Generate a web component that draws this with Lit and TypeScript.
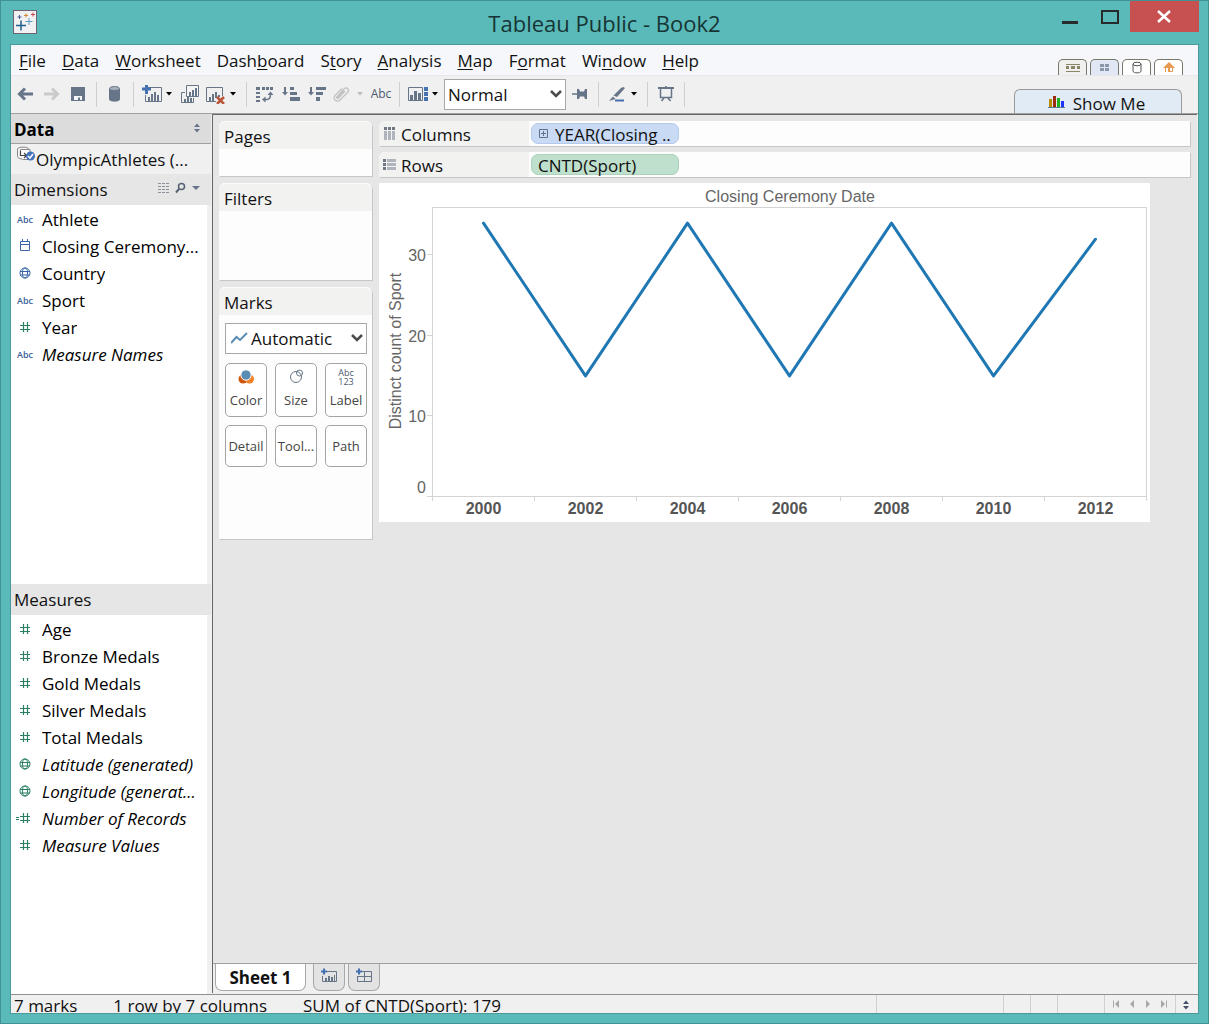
import { LitElement, html, css, svg, nothing } from "lit";
import { customElement, property } from "lit/decorators.js";

const G = "#667587";
const B = "#4472b0";

/* Icons share a 20x20 canvas. */
const icons: Record<string, unknown> = {
  back: svg`<path d="M4 10H17M9 4.500L3.500 10L9 15.500" fill="none" stroke="${G}" stroke-width="3"/>`,
  forward: svg`<path d="M2 10H15M10 4.500L15.500 10L10 15.500" fill="none" stroke="#cacaca" stroke-width="3"/>`,
  save: svg`<path d="M3 3H17V17H3Z" fill="${G}"/><path d="M6 12H14V16H12V13.500H10V16H6Z" fill="#f4f6f8"/>`,
  database: svg`<path d="M4 4.500V15C4 18.500 15 18.500 15 15V4.500Z" fill="${G}"/><ellipse cx="9.500" cy="4.500" rx="5" ry="2" fill="#a9b3be" stroke="${G}"/>`,
  newSheet: svg`<path d="M5 3.500H19.500V17.500H3.500V11" fill="none" stroke="${G}"/><path d="M6 13h2v4H6zM9 10h2v7H9zM12 8h2v9h-2zM15 11h2v6h-2z" fill="${G}"/><path d="M0 5H9M4.500 1V10" stroke="${B}" stroke-width="3"/>`,
  duplicate: svg`<path d="M6.500 1.500H18.500V12.500H6.500Z" fill="#f4f4f4" stroke="${G}"/><path d="M9 8h2v4H9zM12 6h2v6h-2zM15 4h2v8h-2z" fill="${G}"/><path d="M5 8.500H1.500V18.500H13.500V14" fill="none" stroke="${G}"/><path d="M4 15h2v3H4zM7 13h2v5H7zM10 14h2v4h-2z" fill="${G}"/>`,
  clear: svg`<path d="M10 17.500H0.500V3.500H16.500V12" fill="none" stroke="${G}"/><path d="M3 13h2v4H3zM6 10h2v7H6zM9 8h2v6H9zM12 11h2v2h-2z" fill="${G}"/><path d="M11 13L18 20M18 13L11 20" stroke="#b8553a" stroke-width="2.500"/>`,
  swap: svg`<path d="M1 3h4v3H1zM7 3h3v3H7zM11 3h3v3h-3zM15 3h3v3h-3zM1 8h4v2H1zM1 12h4v2H1zM1 16h4v2H1z" fill="${G}"/><path d="M9 15.500H12C15 15.500 15.500 13 15.500 10" fill="none" stroke="${G}" stroke-width="1.500"/><path d="M12.500 11L15.500 7.500L18.500 11ZM10.500 12.500L7 15.500L10.500 18.500Z" fill="${G}"/>`,
  sortAsc: svg`<path d="M4 3V9" stroke="${G}" stroke-width="2"/><path d="M1 8H7L4 11.500Z" fill="${G}"/><path d="M9 3h4v3H9zM9 8h7v3H9zM9 13h10v4H9z" fill="${G}"/>`,
  sortDesc: svg`<path d="M4 3V9" stroke="${G}" stroke-width="2"/><path d="M1 8H7L4 11.500Z" fill="${G}"/><path d="M9 3h10v3H9zM9 8h7v3H9zM9 13h4v4H9z" fill="${G}"/>`,
  clip: svg`<path d="M3 14L11 5C14 2 17 6 14.500 8.500L7 16C4 19 -1 15 2 11.500L9 4.500M12 7L5.500 14C4.500 15 3.500 14 4.500 13L11 6.500" fill="none" stroke="#c2c2c2" stroke-width="1.300"/>`,
  showHide: svg`<path d="M0.500 3.500H14.500V16.500H0.500Z" fill="none" stroke="${G}"/><path d="M2 11h3v5H2zM6 7h3v9H6zM10 9h3v7h-3z" fill="${G}"/><path d="M16 3h4v4h-4zM16 8h4v4h-4zM16 13h4v4h-4z" fill="${B}"/>`,
  pin: svg`<path d="M2 10H8" stroke="${G}" stroke-width="1.500"/><path d="M7 5H9L10 7.500H14L15 5H17V15H15L14 12.500H10L9 15H7Z" fill="${G}"/>`,
  pen: svg`<path d="M16 3L18 4L10 13L6.500 11.500L14 4Z" fill="${G}"/><path d="M6 12.500L8.500 15L2 17Z" fill="${G}"/><path d="M8 16.500H17" stroke="${B}" stroke-width="2"/>`,
  present: svg`<path d="M2 4H18" stroke="${G}" stroke-width="2"/><path d="M4.500 5V13.500H15.500V5M10 2V4M8 14L5.500 17M12 14L14.500 17" fill="none" stroke="${G}" stroke-width="1.500"/>`,
  /* data pane */
  date: svg`<path d="M5.500 4.500H14.500V13.500H5.500ZM5 7.500H15M7.500 2V5M12.500 2V5" fill="none" stroke="#3a66a8"/>`,
  globe: svg`<circle cx="10" cy="9" r="5" fill="none" stroke="currentColor"/><ellipse cx="10" cy="9" rx="2.500" ry="5" fill="none" stroke="currentColor"/><path d="M5 7.500H15M5 11H15" stroke="currentColor"/>`,
  number: svg`<path d="M8.500 4V14M12.500 4V14M5 7.500H15M5 11.500H15" stroke="#2a8060" stroke-width="1.200" fill="none"/>`,
  calcNumber: svg`<path d="M8.500 4V14M12.500 4V14M5 7.500H15M5 11.500H15M1 8.500H4M1 10.500H4" stroke="#2a8060" stroke-width="1.200" fill="none"/>`,
  source: svg`<path d="M0.500 3V10.500C0.500 12 3 13 6 13V5M0.500 3C0.500 0.500 11.500 0.500 11.500 3V5" fill="#f4f4f4" stroke="#8a8a8a"/><path d="M3.500 5.500V3.500H13V13.500H5.500" fill="#fff" stroke="#8a8a8a"/><path d="M3.500 5V9.500H9M7 7L9.500 9.500L7 12" fill="none" stroke="#444" stroke-width="1.200"/><circle cx="13.500" cy="10" r="4.500" fill="#4472b8"/><path d="M11 10L13 12L16 8" fill="none" stroke="#fff" stroke-width="1.500"/>`,
  updown: svg`<path d="M7 9L10 5.500L13 9ZM7 11L10 14.500L13 11Z" fill="currentColor"/>`,
  grid: svg`<path d="M4 5.500H16M4 8.500H16M4 11.500H16M4 14.500H16" stroke="#8a8f98" stroke-dasharray="3 1"/>`,
  search: svg`<circle cx="11.500" cy="8.500" r="3" fill="none" stroke="#566274" stroke-width="1.500"/><path d="M9 11L6 14.500" stroke="#566274" stroke-width="2"/>`,
  down: svg`<path d="M6 8H14L10 12Z" fill="#667587"/>`,
  columns: svg`<path d="M4 3h3v3H4zM8 3h3v3H8zM12 3h3v3h-3z" fill="#6f7885"/><path d="M4 7h3v9H4zM8 7h3v9H8zM12 7h3v9h-3z" fill="#b0b5bd"/>`,
  rows: svg`<path d="M3 4h3v3H3zM3 8h3v3H3zM3 12h3v3H3z" fill="#6f7885"/><path d="M7 4h9v3H7zM7 8h9v3H7zM7 12h9v3H7z" fill="#b0b5bd"/>`,
  /* marks card */
  color: svg`<circle cx="7" cy="12" r="4.500" fill="#cf560d"/><circle cx="13.500" cy="12" r="4.500" fill="#f58025"/><circle cx="10" cy="8" r="5.200" fill="#5b8db4" stroke="#fff"/>`,
  size: svg`<circle cx="10" cy="10" r="5.500" fill="none" stroke="#667587"/><circle cx="13.500" cy="6" r="3" fill="none" stroke="#667587"/>`,
  line: svg`<path d="M0 15L5.500 9L9 12L16 5" fill="none" stroke="#5b8db4" stroke-width="2"/>`,
  plus: svg`<path d="M6.500 5.500H14.500V13.500H6.500ZM8 9.500H13M10.500 7V12" fill="none" stroke="#5f718c"/>`,
  bars: svg`<path d="M2 7h3v8H2z" fill="#b88a00"/><path d="M6 4h3v11H6z" fill="#9c2c10"/><path d="M10 6h3v9h-3z" fill="#20b020"/><path d="M14 9h3v6h-3z" fill="#2030ff"/><path d="M1 15.500H18" stroke="#5b7a90"/>`,
  /* corner tabs */
  filmstrip: svg`<path d="M3 6.500H17M3 13.500H17" stroke="#8a8468"/><path d="M3 8h3v3H3zM8 8h4v3H8zM14 8h3v3h-3z" fill="#8a8468"/>`,
  sorter: svg`<path d="M5 6h4v3H5zM10 6h4v3h-4zM5 10h4v3H5zM10 10h4v3h-4z" fill="#8a97ab"/>`,
  cylinder: svg`<path d="M6 6V13C6 15.500 14 15.500 14 13V6" fill="none" stroke="#555"/><ellipse cx="10" cy="6" rx="4" ry="1.800" fill="none" stroke="#555"/>`,
  home: svg`<path d="M4 10L10 4L16 10Z" fill="#e89a50"/><path d="M6.500 9V14M13.500 9V13.500H10" fill="none" stroke="#e89a50"/><path d="M9 10h2v4H9z" fill="#e89a50"/>`,
  /* sheet tabs */
  addSheet: svg`<path d="M7 4.500H17.500V14.500H3.500V9" fill="none" stroke="#667587"/><path d="M6 11h2v3H6zM9 9h2v5H9zM12 10h2v4h-2zM15 8h1v6h-1z" fill="#667587"/><path d="M2 4.500H8M5 1.500V7.500" stroke="${B}" stroke-width="2"/>`,
  addBoard: svg`<path d="M8 4.500H17.500V14.500H3.500V9M3 9.500H17M10.500 4V14" fill="none" stroke="#667587"/><path d="M2 4.500H8M5 1.500V7.500" stroke="${B}" stroke-width="2"/>`,
  first: svg`<path d="M7.500 6.500V13.500" stroke="#a8a8a8"/><path d="M13 6V14L9 10Z" fill="#a8a8a8"/>`,
  prev: svg`<path d="M12 6V14L8 10Z" fill="#a8a8a8"/>`,
  next: svg`<path d="M8 6V14L12 10Z" fill="#a8a8a8"/>`,
  last: svg`<path d="M12.500 6.500V13.500" stroke="#a8a8a8"/><path d="M7 6V14L11 10Z" fill="#a8a8a8"/>`,
  minimize: svg`<path d="M2 15.500H18" stroke="#262b2b" stroke-width="3"/>`,
  maximize: svg`<path d="M2 4H18V16H2Z" fill="none" stroke="#262b2b" stroke-width="2"/>`,
  close: svg`<path d="M3 4L15 15M15 4L3 15" stroke="#fff" stroke-width="2.500"/>`,
};

const icon = (name: string) =>
  html`<svg class="icon" width="20" height="20" viewBox="0 0 20 20" aria-hidden="true">${icons[name]}</svg>`;

const shared = css`
  * { box-sizing: border-box; }
  button, select {
    font: inherit; color: inherit; background: none; border: 0; padding: 0; margin: 0; border-radius: 0;
  }
  ul, h1, h2, h3, p { margin: 0; padding: 0; font-size: inherit; font-weight: inherit; list-style: none; }
  .icon { display: block; flex: none; }
  .pick { position: relative; display: flex; background: #fff; border: 1px solid #a8a8a8; }
  .pick select { appearance: none; flex: 1; min-width: 0; }
  .pick .chevron { position: absolute; right: 3px; top: 9px; pointer-events: none; }
`;

const chevron = html`<svg class="chevron" width="12" height="10" viewBox="0 0 12 10" aria-hidden="true">
  <path d="M1 2L6 7L11 2" fill="none" stroke="#4c4c4c" stroke-width="2.500"/></svg>`;

interface Field { icon: string; name: string; generated?: boolean; }

const dimensions: Field[] = [
  { icon: "abc", name: "Athlete" },
  { icon: "date", name: "Closing Ceremony..." },
  { icon: "globe", name: "Country" },
  { icon: "abc", name: "Sport" },
  { icon: "number", name: "Year" },
  { icon: "abc", name: "Measure Names", generated: true },
];

const measures: Field[] = [
  { icon: "number", name: "Age" },
  { icon: "number", name: "Bronze Medals" },
  { icon: "number", name: "Gold Medals" },
  { icon: "number", name: "Silver Medals" },
  { icon: "number", name: "Total Medals" },
  { icon: "globe", name: "Latitude (generated)", generated: true },
  { icon: "globe", name: "Longitude (generat...", generated: true },
  { icon: "calcNumber", name: "Number of Records", generated: true },
  { icon: "number", name: "Measure Values", generated: true },
];

@customElement("field-list")
class FieldList extends LitElement {
  @property({ attribute: false }) fields: Field[] = [];
  @property() tone = "";

  static styles = [shared, css`
    :host { display: block; flex: 1 1 0; background: #fff; border-right: 4px solid #f0f0f0; padding-top: 1px; }
    button { display: flex; align-items: center; width: 100%; height: 27px; padding-left: 4px; text-align: left; }
    .name { margin-left: 7px; overflow: hidden; white-space: nowrap; text-overflow: ellipsis; color: #000; }
    .generated { font-style: italic; }
    .abc { width: 20px; padding-left: 2px; font-size: 9px; font-weight: 600; color: #3a5f9a; flex: none; }
    .blue { color: #3a66a8; }
    .green { color: #2a8060; }
  `];

  render() {
    return html`<ul class=${this.tone}>
      ${this.fields.map((f) => html`<li><button>
        ${f.icon === "abc" ? html`<span class="abc">Abc</span>` : icon(f.icon)}
        <span class="name ${f.generated ? "generated" : ""}">${f.name}</span>
      </button></li>`)}
    </ul>`;
  }
}

@customElement("line-chart")
class LineChart extends LitElement {
  static styles = css`
    :host { display: block; background: #fff; max-width: 771px; }
    svg { display: block; width: 100%; height: auto; }
    text { font-family: "Liberation Sans", Arial, sans-serif; font-size: 16px; fill: #666; }
    .year { font-weight: bold; fill: #555; text-anchor: middle; }
    .tick { text-anchor: end; }
    .title { text-anchor: middle; }
    .rule { stroke: #d4d4d4; fill: none; }
    .series { stroke: #1f77b4; stroke-width: 3; fill: none; stroke-linecap: round; stroke-linejoin: round; }
  `;

  private points = [
    [2000, 34], [2002, 15], [2004, 34], [2006, 15], [2008, 34], [2010, 15], [2012, 32],
  ];

  private x = (i: number) => 104.5 + i * 102;
  private y = (v: number) => 313.5 - v * 8.04;

  render() {
    const path = this.points.map(([, v], i) => `${this.x(i)},${this.y(v)}`).join(" ");
    return html`<svg viewBox="0 0 771 339" role="img" aria-label="Distinct count of Sport by Closing Ceremony Date">
      <rect class="rule" x="53.5" y="24.5" width="714" height="289"/>
      ${[0, 10, 20, 30].map((v) => svg`
        <path class="rule" d="M48 ${Math.round(this.y(v)) - 0.5}h5"/>
        <text class="tick" x="47" y=${v === 0 ? 310 : Math.round(this.y(v)) + 6}>${v}</text>`)}
      ${[0, 1, 2, 3, 4, 5, 6, 7].map((i) => svg`<path class="rule" d="M${53.5 + i * 102} 313v5"/>`)}
      ${this.points.map(([year], i) => svg`<text class="year" x=${this.x(i)} y="331">${year}</text>`)}
      <text class="title" x="411" y="19">Closing Ceremony Date</text>
      <text class="title" transform="translate(22 168) rotate(-90)">Distinct count of Sport</text>
      <polyline class="series" points=${path}/>
    </svg>`;
  }
}

@customElement("app-root")
class AppRoot extends LitElement {
  static styles = [shared, css`
    :host {
      display: flex; flex-direction: column; box-sizing: border-box; min-height: 100vh;
      font: 17px/24px "Open Sans", "Noto Sans", sans-serif; color: #111;
      background: #5abab9; border: 1px solid #439090; padding: 0 9px 9px;
    }
    .titlebar { display: grid; grid-template-columns: 1fr auto 1fr; height: 43px; }
    .titlebar h1 { font-size: 22px; line-height: 44px; color: #173434; }
    .logo { margin: 9px 0 0 3px; }
    .controls { display: flex; justify-content: flex-end; height: 31px; }
    .controls button { width: 40px; display: grid; place-items: center; }
    .controls .close { width: 69px; background: #c75050; }

    .client { flex: 1; display: flex; flex-direction: column; border: 1px solid #4a9a9b; background: #f0f0f0; }
    .menubar { display: flex; justify-content: space-between; height: 31px; background: #f5f7fa; border-bottom: 1px solid #e6e8ea; }
    .menus { display: flex; gap: 16px; padding: 4px 8px 0; }
    .menus button { height: 24px; }
    .menus u { text-underline-offset: 2px; text-decoration-thickness: 1px; text-decoration-skip-ink: none; }
    .corner { display: flex; align-items: flex-end; gap: 3px; padding-right: 15px; }
    .corner button {
      width: 29px; height: 16px; border: 1px solid #77776a; border-bottom: 0; border-radius: 5px 5px 0 0;
      background: #fff; display: grid; grid-template-rows: 100%; place-items: center; overflow: hidden;
    }
    .corner .strip { background: #f0f0ee; }
    .corner .sorter { background: #e1e7f5; }

    .toolbar { display: flex; height: 38px; padding: 0 16px 0 2px; border-bottom: 1px solid #a0a0a0; }
    .tool { width: 26px; height: 36px; display: grid; place-items: center; }
    .caret { width: 12px; height: 36px; display: flex; align-items: center; color: #000; }
    .caret.off { color: #bcbcbc; }
    .tool.text { font-size: 12px; color: #4c5a6e; }
    .sep { width: 11px; height: 36px; display: grid; justify-content: center; align-items: center; }
    .sep::before { content: ""; width: 1px; height: 25px; background: #cfcfcf; }
    .toolbar .pick { width: 122px; height: 31px; margin: 3px 1px 0; }
    .toolbar .pick select { padding-left: 3px; }
    .showme {
      margin-left: auto; align-self: flex-end; width: 168px; height: 24px; display: flex; justify-content: center;
      align-items: center; gap: 6px; background: #e0ebf5; border: 1px solid #9a9a9a; border-bottom: 0;
      border-radius: 6px 6px 0 0; line-height: 22px; padding-right: 4px;
    }
    .showme span { padding-top: 4px; }

    .body { flex: 1; display: flex; }
    .pane { width: 200px; flex: none; display: flex; flex-direction: column; }
    .pane h2 {
      display: flex; justify-content: space-between; align-items: center; height: 30px; padding: 2px 4px 0 3px;
      background: #dcdcdc; border-bottom: 1px solid #a0a0a0; font-weight: 700; color: #000;
    }
    .pane h2 .icon { color: #667587; margin-bottom: 4px; }
    .source { display: flex; height: 30px; padding: 0 16px 0 6px; text-align: left; }
    .source .icon { margin-top: 2px; }
    .source span { padding-top: 4px; white-space: nowrap; margin-left: -1px; }
    .pane h3 { display: flex; height: 31px; padding: 4px 7px 0 3px; background: #e6e6e6; }
    .pane h3 .actions { margin-left: auto; display: flex; }
    .pane h3 button { width: 16px; height: 20px; display: grid; justify-content: center; align-items: center; }

    .work { flex: 1; min-width: 0; display: flex; flex-direction: column; margin: 0 1px 1px 1px; border-left: 1px solid #666; }
    .canvas {
      flex: 1; display: grid; grid-template-columns: 153px minmax(0, 1fr); gap: 7px; align-items: start;
      padding: 6px 7px 0 6px; background: #e6e6e6; border-top: 1px solid #666;
    }
    .cards { display: flex; flex-direction: column; gap: 7px; }
    .card { min-height: 55px; background: #fdfdfd; border-radius: 6px 6px 0 0; box-shadow: 1px 1px 0 #c6c6c6; }
    .card h3 { height: 28px; padding: 3px 5px 0; background: #f2f2f1; border-radius: 6px 6px 0 0; border-top: 1px solid #fbfbfb; }
    .filters { min-height: 97px; }
    .marks { min-height: 252px; }
    .marks-body { display: grid; grid-template-columns: repeat(3, 42px); justify-content: space-between; row-gap: 8px; padding: 8px 5px 0 6px; }
    .marks .pick { grid-column: 1 / -1; height: 31px; margin-bottom: 1px; }
    .marks .pick .icon { margin: 4px 0 0 5px; }
    .mark {
      height: 42px; border: 1px solid #a4a4a4; border-radius: 5px; background: #fff;
      font-size: 13px; line-height: 18px; color: #444; display: grid; place-items: center; white-space: nowrap;
    }
    .mark.tall { height: 54px; padding: 3px 0 7px; align-content: space-between; }
    .digits { font-size: 9px; line-height: 9px; height: 20px; padding-top: 1px; color: #4c5a6e; }

    .view { display: flex; flex-direction: column; gap: 6px; }
    .shelf { display: flex; height: 25px; background: #fdfdfd; border-radius: 6px 0 0 0; box-shadow: 1px 1px 0 #c6c6c6; }
    .shelf h3 { width: 150px; flex: none; display: flex; gap: 1px; padding: 2px 0 0 1px; background: #f2f2f1; border-radius: 6px 0 0 0; }
    .shelf h3 .icon { margin-top: 1px; }
    .pill {
      width: 148px; height: 21px; margin: 2px; display: flex; align-items: center; border-radius: 7px; line-height: 20px;
      border: 1px solid #b4caec; background: #c9daf5; padding-left: 1px; white-space: nowrap;
    }
    .pill span { padding: 2px 0 0 2px; }
    .pill.measure { background: #bfe0cc; border-color: #abd2ba; padding-left: 4px; }
    .view line-chart { width: 100%; }

    .sheets { display: flex; height: 30px; padding: 0 2px; border-top: 1px solid #a0a0a0; }
    .sheets button { height: 27px; border: 1px solid #a8a8a8; border-top: 0; border-radius: 0 0 7px 7px; }
    .sheets .active { width: 91px; margin: 0 7px 0 0; background: #fff; font-weight: 700; line-height: 28px; }
    .sheets .add { width: 32px; margin-right: 3px; background: #e3e3e3; padding: 3px 5px; }

    .status { display: flex; height: 19px; padding-left: 3px; border-top: 1px solid #909090; overflow: hidden; white-space: nowrap; }
    .status p { height: 18px; margin-right: 36px; line-height: 22px; }
    .cell { width: 27px; border-left: 1px solid #d0d0d0; }
    .cell.first { width: 127px; margin-left: auto; }
    .cell.mid { width: 47px; }
    .cell.nav { width: 71px; display: flex; align-items: center; padding-left: 3px; }
    .cell.nav button { width: 16px; display: grid; justify-content: center; }
    .cell.end { width: 23px; color: #44506a; }
  `];

  private tool(name: string, label: string) {
    return html`<button class="tool" aria-label=${label}>${icon(name)}</button>`;
  }

  private caret(label: string, off = false) {
    return html`<button class="caret ${off ? "off" : ""}" aria-label=${label} ?disabled=${off}>
      <svg width="8" height="6" viewBox="0 0 8 6" aria-hidden="true"><path d="M1 1H7L4 4.500Z" fill="currentColor"/></svg>
    </button>`;
  }

  private menu(text: string, at: number) {
    return html`<button>${text.slice(0, at) || nothing}<u>${text[at]}</u>${text.slice(at + 1)}</button>`;
  }

  render() {
    const sep = html`<span class="sep"></span>`;
    return html`
      <header class="titlebar">
        <svg class="logo" width="24" height="24" viewBox="0 0 24 24" aria-hidden="true">
          <rect x="0.500" y="0.500" width="23" height="23" fill="#f1f1f3" stroke="#6b6470"/>
          <path d="M3 15.500H13M8 10.500V20.500" stroke="#1f5f8b" stroke-width="1.500"/>
          <path d="M12.500 11.500H19.500M16 8V15" stroke="#5b9abf"/>
          <path d="M4.500 7H8.500M6.500 5V9" stroke="#4a5a90"/>
          <path d="M11 5.500H15M13 3.500V7.500" stroke="#d08a30"/>
          <path d="M18 4.500H22M20 2.500V6.500" stroke="#c74848"/>
        </svg>
        <h1>Tableau Public - Book2</h1>
        <div class="controls">
          <button aria-label="Minimize">${icon("minimize")}</button>
          <button aria-label="Maximize">${icon("maximize")}</button>
          <button class="close" aria-label="Close">${icon("close")}</button>
        </div>
      </header>
      <div class="client">
        <nav class="menubar">
          <div class="menus">
            ${this.menu("File", 0)}${this.menu("Data", 0)}${this.menu("Worksheet", 0)}${this.menu("Dashboard", 4)}
            ${this.menu("Story", 1)}${this.menu("Analysis", 0)}${this.menu("Map", 0)}${this.menu("Format", 1)}
            ${this.menu("Window", 2)}${this.menu("Help", 0)}
          </div>
          <div class="corner">
            <button class="strip" aria-label="Filmstrip">${icon("filmstrip")}</button>
            <button class="sorter" aria-label="Sheet sorter">${icon("sorter")}</button>
            <button aria-label="Data source">${icon("cylinder")}</button>
            <button aria-label="Start page">${icon("home")}</button>
          </div>
        </nav>
        <div class="toolbar" role="toolbar">
          ${this.tool("back", "Undo")}${this.tool("forward", "Redo")}${this.tool("save", "Save")}${sep}
          ${this.tool("database", "Connect to data")}${sep}
          ${this.tool("newSheet", "New worksheet")}${this.caret("New worksheet options")}
          ${this.tool("duplicate", "Duplicate sheet")}
          ${this.tool("clear", "Clear sheet")}${this.caret("Clear options")}${sep}
          ${this.tool("swap", "Swap rows and columns")}${this.tool("sortAsc", "Sort ascending")}
          ${this.tool("sortDesc", "Sort descending")}
          ${this.tool("clip", "Group members")}${this.caret("Group options", true)}
          <button class="tool text">Abc</button>${sep}
          ${this.tool("showHide", "Show or hide cards")}${this.caret("Card options")}
          <div class="pick"><select aria-label="Fit"><option>Normal</option></select>${chevron}</div>
          ${this.tool("pin", "Fix axes")}${sep}
          ${this.tool("pen", "Highlight")}${this.caret("Highlight options")}${sep}
          ${this.tool("present", "Presentation mode")}${sep}
          <button class="showme">${icon("bars")}<span>Show Me</span></button>
        </div>
        <div class="body">
          <aside class="pane">
            <h2>Data ${icon("updown")}</h2>
            <button class="source">${icon("source")}<span>OlympicAthletes (...</span></button>
            <h3>Dimensions
              <span class="actions">
                <button aria-label="View data">${icon("grid")}</button>
                <button aria-label="Find field">${icon("search")}</button>
                <button aria-label="Pane menu">${icon("down")}</button>
              </span>
            </h3>
            <field-list tone="blue" .fields=${dimensions}></field-list>
            <h3>Measures</h3>
            <field-list tone="green" .fields=${measures}></field-list>
          </aside>
          <main class="work">
            <div class="canvas">
              <div class="cards">
                <section class="card"><h3>Pages</h3></section>
                <section class="card filters"><h3>Filters</h3></section>
                <section class="card marks">
                  <h3>Marks</h3>
                  <div class="marks-body">
                    <div class="pick">${icon("line")}<select aria-label="Mark type"><option>Automatic</option></select>${chevron}</div>
                    <button class="mark tall">${icon("color")}Color</button>
                    <button class="mark tall">${icon("size")}Size</button>
                    <button class="mark tall"><span class="digits">Abc<br>123</span>Label</button>
                    <button class="mark">Detail</button>
                    <button class="mark">Tool...</button>
                    <button class="mark">Path</button>
                  </div>
                </section>
              </div>
              <div class="view">
                <section class="shelf">
                  <h3>${icon("columns")}Columns</h3>
                  <button class="pill">${icon("plus")}<span>YEAR(Closing ..</span></button>
                </section>
                <section class="shelf">
                  <h3>${icon("rows")}Rows</h3>
                  <button class="pill measure"><span>CNTD(Sport)</span></button>
                </section>
                <line-chart></line-chart>
              </div>
            </div>
            <div class="sheets">
              <button class="active">Sheet 1</button>
              <button class="add" aria-label="New worksheet">${icon("addSheet")}</button>
              <button class="add" aria-label="New dashboard">${icon("addBoard")}</button>
            </div>
          </main>
        </div>
        <footer class="status">
          <p>7 marks</p><p>1 row by 7 columns</p><p>SUM of CNTD(Sport): 179</p>
          <span class="cell first"></span><span class="cell"></span><span class="cell"></span><span class="cell mid"></span>
          <span class="cell nav">
            <button aria-label="First">${icon("first")}</button><button aria-label="Previous">${icon("prev")}</button>
            <button aria-label="Next">${icon("next")}</button><button aria-label="Last">${icon("last")}</button>
          </span>
          <button class="cell end" aria-label="Resize">${icon("updown")}</button>
        </footer>
      </div>`;
  }
}
